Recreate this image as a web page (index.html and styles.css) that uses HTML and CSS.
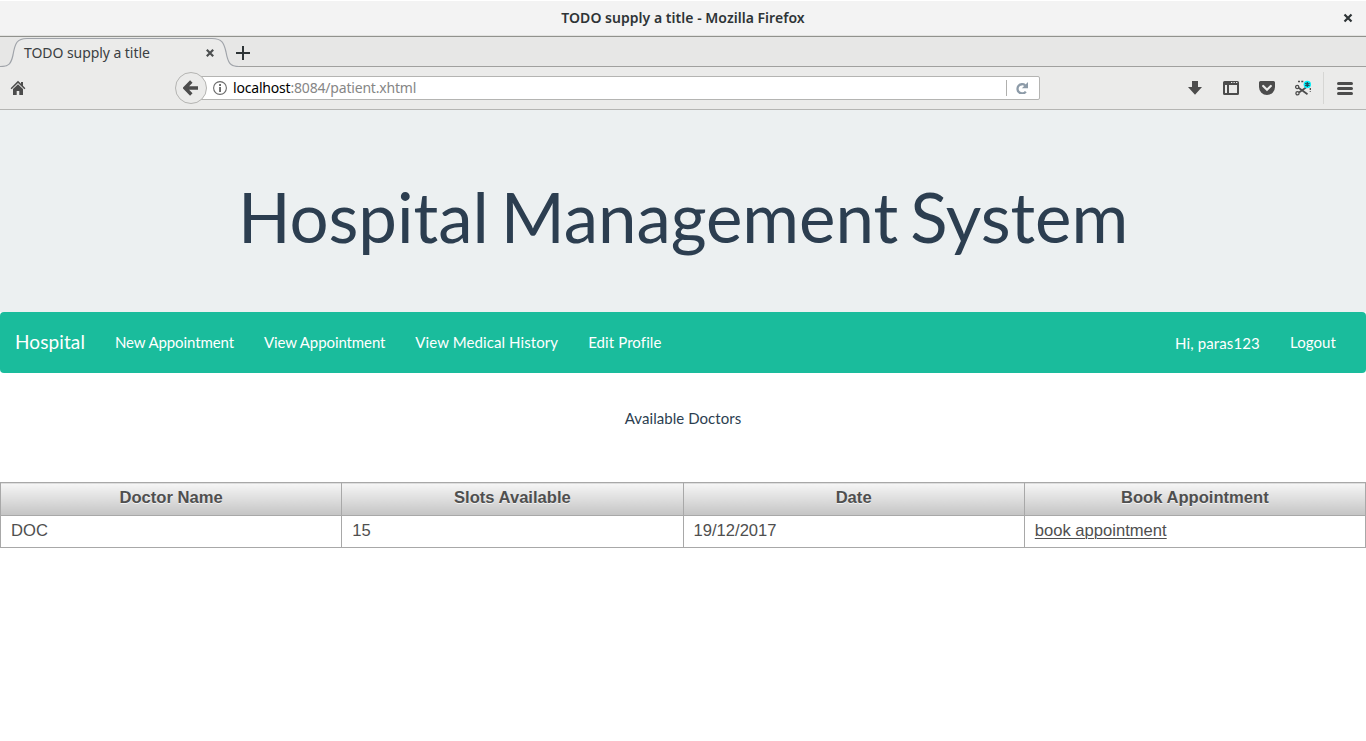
FILE: index.html
```html
<!DOCTYPE html>
<html lang="en">
<head>
<meta charset="utf-8">
<title>TODO supply a title</title>
<link rel="stylesheet" href="styles.css">
</head>
<body>
<header class="titlebar">
  <span class="window-title">TODO supply a title - Mozilla Firefox</span>
  <svg class="window-close" width="10" height="10" viewBox="0 0 10 10"><path d="M1.500 1.500l7 7M8.500 1.500l-7 7" stroke="#2e3436" stroke-width="2.200"/></svg>
</header>
<div class="tabstrip">
  <div class="tab">
    <svg class="tab-shape" width="240" height="30" viewBox="0 0 240 30"><path d="M0 29.500C9 29.500 11 27 13 18C15 6 17 1.500 27 1.500H212C222 1.500 224 6 226 15C228 26 230 29.500 239 29.500V30H0Z" fill="#ebebea"/><path d="M0 29.500C9 29.500 11 27 13 18C15 6 17 1.500 27 1.500H212C222 1.500 224 6 226 15C228 26 230 29.500 239 29.500" fill="none" stroke="#a0a4aa" stroke-width="1.200"/></svg>
    <span class="tab-title">TODO supply a title</span>
    <svg class="tab-close" width="8" height="8" viewBox="0 0 8 8"><path d="M.8.8l6.400 6.400M7.200.8L.8 7.200" stroke="#4c4f50" stroke-width="2.200"/></svg>
  </div>
  <svg class="tab-new" width="14" height="14" viewBox="0 0 14 14"><path d="M7 0v14M0 7h14" stroke="#2e3436" stroke-width="2"/></svg>
</div>
<div class="toolbar">
  <svg class="home" width="16" height="16" viewBox="0 0 16 16" fill="#4c4c4c"><path d="M8 .8L.6 8.200l1 1L8 2.900l6.400 6.300 1-1L13 5.800V2h-2v1.800z"/><path d="M8 4.200L3 9.100V15h3.700v-4h2.600v4H13V9.100z"/></svg>
  <div class="location">
    <span class="back"><svg width="16" height="16" viewBox="0 0 16 16"><path d="M8.300 1.500L2 8l6.300 6.500M2.500 8H15" fill="none" stroke="#4c4c4c" stroke-width="3.400"/></svg></span>
    <svg class="info" width="14" height="14" viewBox="0 0 14 14"><circle cx="7" cy="7" r="6.400" fill="none" stroke="#6a6a6a" stroke-width="1.100"/><path d="M6.100 3h1.900v1.900H6.100zM6.100 6h1.900v5H6.100z" fill="#6a6a6a"/></svg>
    <span class="url"><b>localhost</b>:8084/patient.xhtml</span>
    <span class="reload"><svg width="12" height="12" viewBox="0 0 12 12"><path d="M9.200 3.400A4.600 4.600 0 1 0 9.800 9.600" fill="none" stroke="#8d9ba8" stroke-width="2.300"/><path d="M12 0v6.200H5.900z" fill="#8d9ba8"/></svg></span>
  </div>
  <div class="tools">
    <svg width="16" height="16" viewBox="0 0 16 16"><path d="M5 1h6v6h4l-7 7.800L1 7h4z" fill="#4c4c4c"/></svg>
    <svg width="16" height="16" viewBox="0 0 16 16"><path fill-rule="evenodd" d="M1.500 1h13A1.500 1.500 0 0 1 16 2.500v11a1.500 1.500 0 0 1-1.500 1.500h-13A1.500 1.500 0 0 1 0 13.500v-11A1.500 1.500 0 0 1 1.500 1zM2 5v8h2V5zm4 0v8h8V5z" fill="#4c4c4c"/><path d="M8 2.500h1.300M10.500 2.500h1.300M13 2.500h1.300" stroke="#ebebea"/></svg>
    <svg width="16" height="16" viewBox="0 0 16 16"><path d="M1.500 1h13A1.500 1.500 0 0 1 16 2.500V7a8 8 0 0 1-16 0V2.500A1.500 1.500 0 0 1 1.500 1z" fill="#4c4c4c"/><path d="M4.200 6L8 9.700 11.800 6" fill="none" stroke="#ebebea" stroke-width="2.200" stroke-linecap="round"/></svg>
    <svg width="16" height="16" viewBox="0 0 16 16"><path d="M3 1.500h6M15.300 8v4" fill="none" stroke="#4c4c4c" stroke-width="1.300" stroke-dasharray="2 1.300"/><path d="M3.500 7.800L12.500 14.200M4 12.500L11 7.500" stroke="#4c4c4c" stroke-width="1.700"/><circle cx="2.200" cy="7" r="1.600" fill="none" stroke="#4c4c4c" stroke-width="1.300"/><circle cx="2.500" cy="13.300" r="1.600" fill="none" stroke="#4c4c4c" stroke-width="1.300"/><circle cx="12.300" cy="4.500" r="3.700" fill="#00f0fa"/><path d="M12.300 2v5M10.100 3.300l4.400 2.500M10.100 5.800l4.400-2.500" stroke="#1c4c58" stroke-width="1.300"/></svg>
    <svg class="menu" width="16" height="16" viewBox="0 0 16 16"><path d="M1.500 3.500h13M1.500 8.500h13M1.500 13.500h13" stroke="#4c4c4c" stroke-width="3" stroke-linecap="round"/></svg>
  </div>
</div>
<main>
  <div class="jumbotron"><h1>Hospital Management System</h1></div>
  <nav class="navbar">
    <a class="brand">Hospital</a>
    <a class="tight">New Appointment</a>
    <a class="tight">View Appointment</a>
    <a class="loose">View Medical History</a>
    <a class="loose">Edit Profile</a>
    <span class="greeting">Hi, paras123</span>
    <a class="loose">Logout</a>
  </nav>
  <p class="caption">Available Doctors</p>
  <table class="doctors">
    <thead><tr><th>Doctor Name</th><th>Slots Available</th><th>Date</th><th>Book Appointment</th></tr></thead>
    <tbody><tr><td>DOC</td><td>15</td><td>19/12/2017</td><td><a class="book">book appointment</a></td></tr></tbody>
  </table>
</main>
</body>
</html>
```
FILE: styles.css
```css
* { box-sizing: border-box; }
body { margin: 0; height: 741px; overflow: hidden; background: #fff; color: #2c3e50; font: 15px/21px Lato, sans-serif; }
svg { display: block; flex: none; }

/* Browser window */
.titlebar, .tabstrip, .toolbar { font-family: "Noto Sans", "Open Sans", sans-serif; }
.titlebar { position: relative; height: 37px; display: flex; align-items: center; justify-content: center; background: #f3f3f3; border-top: 1px solid #fff; border-bottom: 1px solid #91928d; box-shadow: inset 0 -1px #e2e2e0; }
.window-title { padding-bottom: 2px; font-size: 14px; font-weight: 600; letter-spacing: .03px; color: #2e3436; }
.window-close { position: absolute; right: 13px; top: 12px; }
.tabstrip { height: 30px; display: flex; align-items: center; background: #e7e7e6; box-shadow: inset 0 -1px #a0a09e; }
.tab { position: relative; width: 236px; height: 30px; padding: 1px 22px 0 24px; display: flex; align-items: center; justify-content: space-between; }
.tab-shape { position: absolute; left: 0; top: 0; }
.tab-title, .tab-close { position: relative; }
.tab-title { font-size: 14px; letter-spacing: -.06px; color: #3b4042; }
.tab-new { margin-top: 2px; }
.toolbar { height: 43px; display: flex; align-items: center; padding: 0 13px 0 10px; background: #ebebea; border-bottom: 1px solid #b5b5b3; }
.location { width: 848px; height: 24px; margin-left: 166px; display: flex; align-items: center; background: #fff; border: 1px solid #b4b4b2; border-radius: 2px; }
.back { width: 32px; height: 32px; flex: none; margin-left: -18px; display: grid; place-items: center; border: 1px solid #b4b4b2; border-radius: 50%; background: #ebebea; }
.info { margin: 0 6px; }
.url { flex: 1; padding-bottom: 2px; font-size: 14px; color: #868686; letter-spacing: -.19px; }
.url b { color: #000; font-weight: 400; }
.reload { height: 16px; padding: 2px 11px 2px 9px; border-left: 1px solid #b0b0ae; }
.tools { margin-left: auto; display: flex; align-items: center; gap: 20px; }
.menu { box-sizing: content-box; padding: 8px 0 8px 13px; margin-left: -8px; border-left: 1px solid #d6d6d4; }

/* Page */
.jumbotron { height: 202px; background: #ecf0f1; text-align: center; padding-top: 69px; }
h1 { margin: 0; font-size: 69px; line-height: 76px; font-weight: 400; letter-spacing: -.05px; word-spacing: -5.5px; }
.navbar { height: 61px; display: flex; align-items: center; padding-right: 15px; background: #1abc9c; border-radius: 4px; color: #fff; }
.navbar a { padding: 0 15px; }
.navbar .brand { font-size: 19px; padding-bottom: 2px; letter-spacing: .1px; }
.tight { letter-spacing: -.1px; }
.loose { letter-spacing: .09px; }
.greeting { margin-left: auto; padding: 2px 15px 0; letter-spacing: .12px; }
.caption { margin: 35px 0 53px; text-align: center; letter-spacing: .05px; }
.doctors { width: 1366px; table-layout: fixed; border-collapse: collapse; font: 16.6px/22px "Liberation Sans", Arial, sans-serif; color: #4f4f4f; }
.doctors th, .doctors td { height: 32px; border: 1px solid #a8a8a8; padding: 4px 10px 5px; }
.doctors th { height: 33px; padding: 4px 10px 6px; background: linear-gradient(#f6f6f6, #c4c4c4); text-shadow: 0 1px 0 rgba(255,255,255,.7); }
.doctors td { text-align: left; }
.book { text-decoration: underline; text-underline-offset: 2px; text-decoration-thickness: 1px; }
```
